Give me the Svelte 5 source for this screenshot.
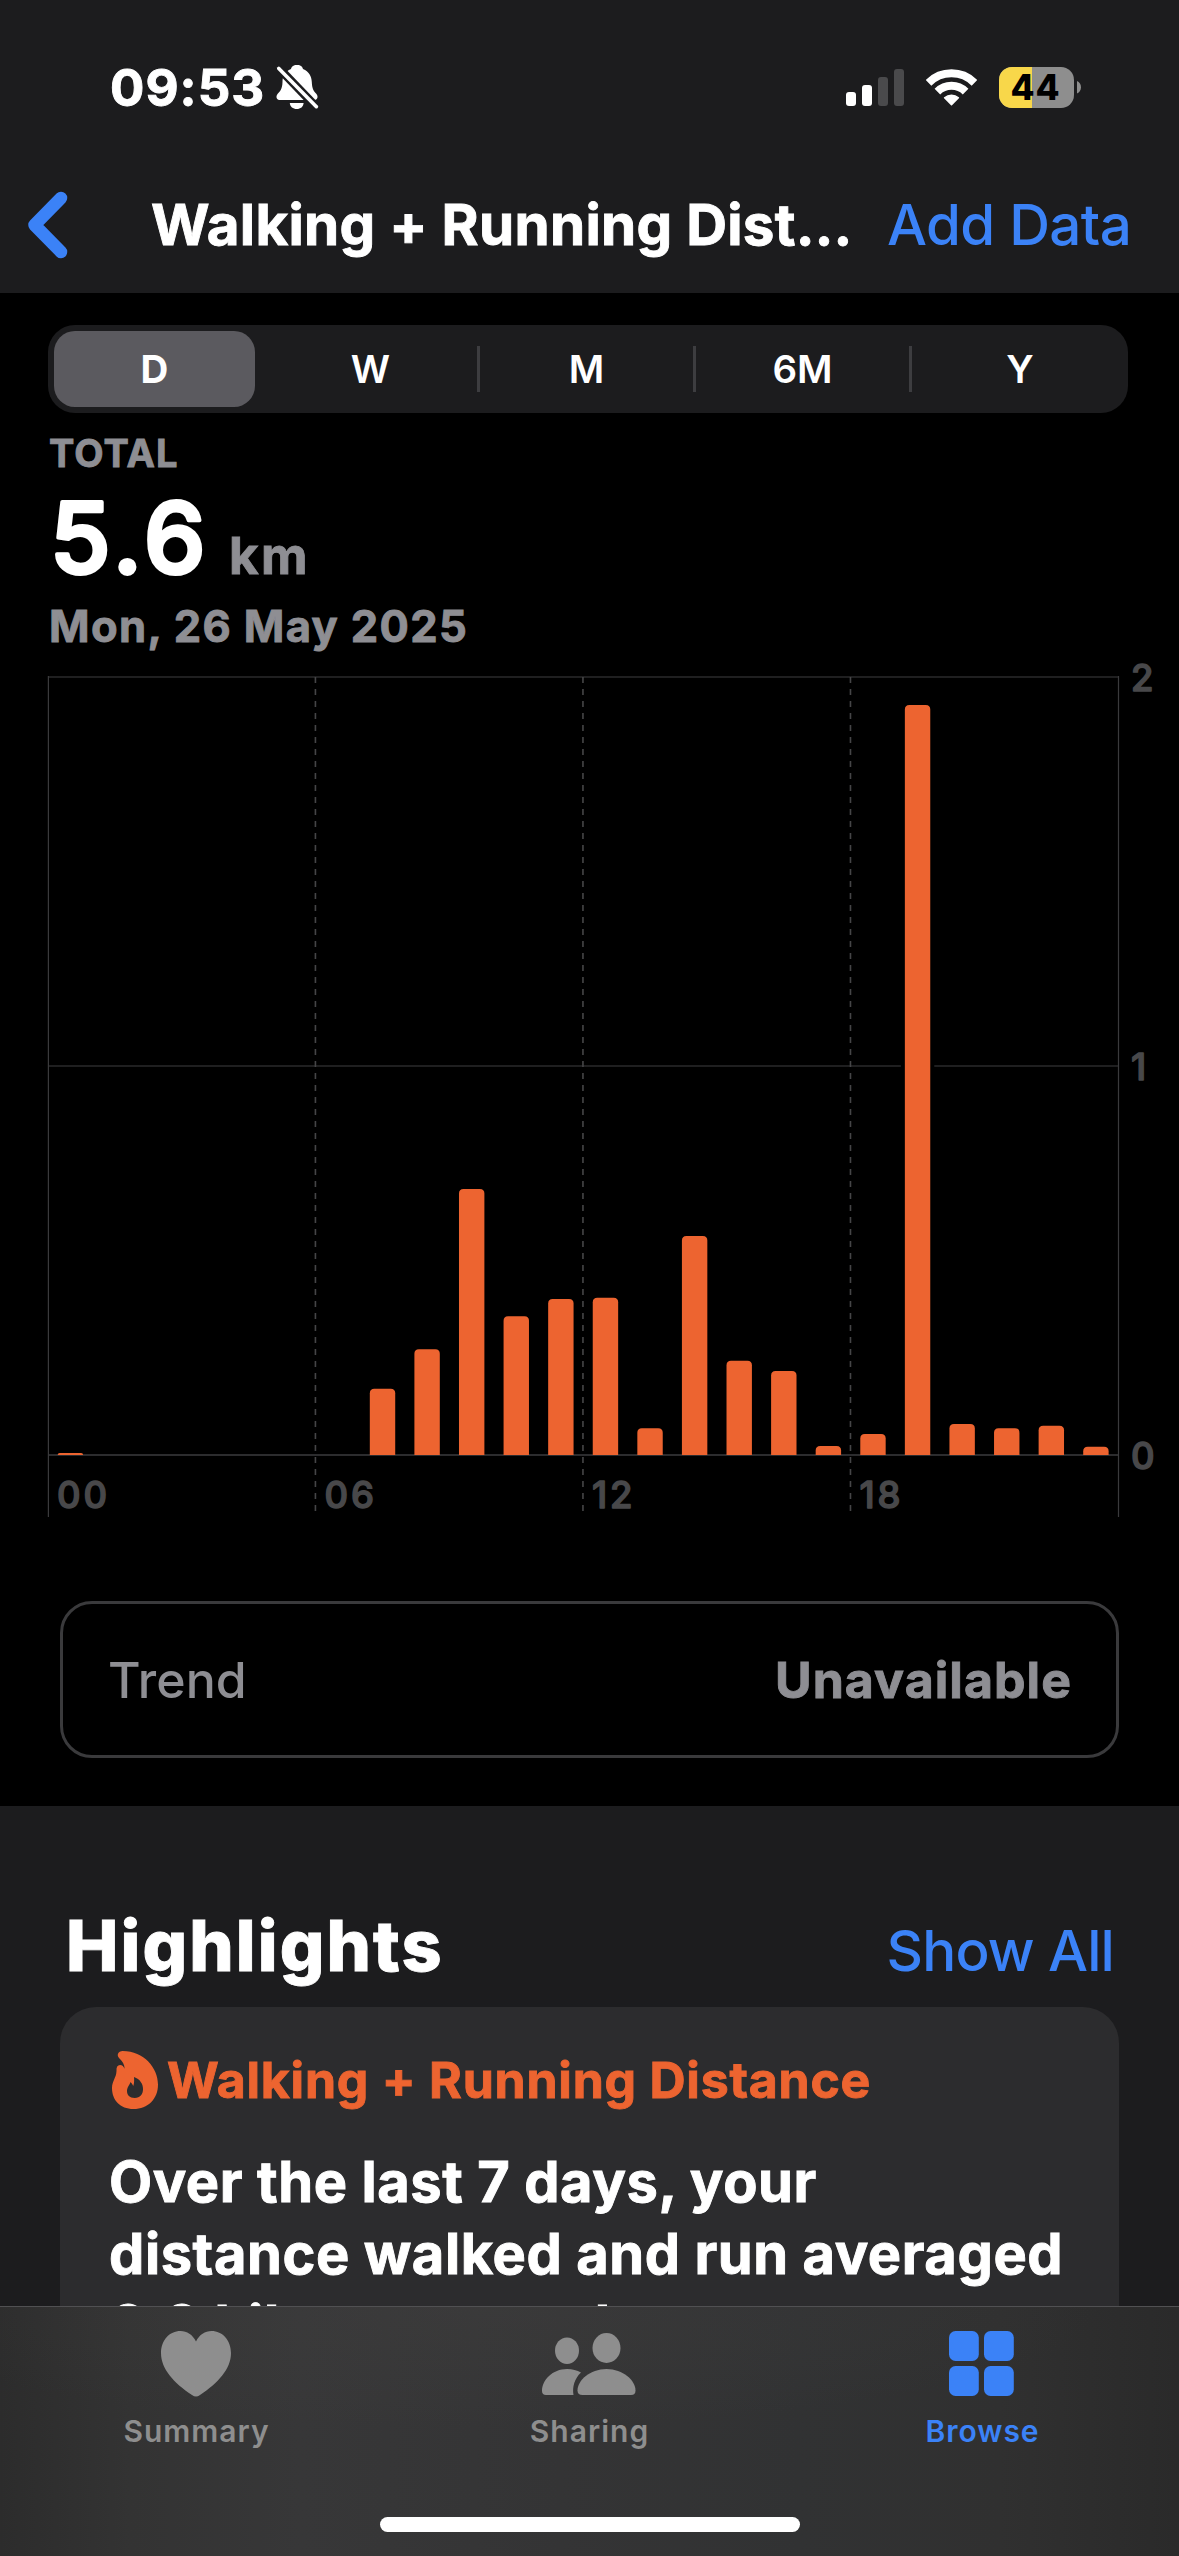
<script>
  const ranges = ['D', 'W', 'M', '6M', 'Y'];

  // Kilometres walked per hour of the day, index 0 = midnight.
  const hourly = [
    0.005, 0, 0, 0, 0, 0, 0, 0.17, 0.272, 0.684, 0.357, 0.401,
    0.404, 0.069, 0.563, 0.242, 0.216, 0.023, 0.054, 1.928, 0.08, 0.069, 0.075, 0.021
  ];

  // Plot area in chart units.
  const left = 48.4;
  const right = 1118.5;
  const top = 26;
  const base = 804;
  const tail = 866;
  const kmHeight = (base - top) / 2;
  const hourWidth = (right - left) / 24;
  const barWidth = 25.4;

  const bars = hourly
    .map((km, hour) => ({
      hour,
      x: left + hour * hourWidth + 9.3,
      y: base - Math.max(km * kmHeight, 2),
      h: Math.max(km * kmHeight, 2)
    }))
    .filter((b) => hourly[b.hour] > 0);

  const barPath = (b) => {
    const r = Math.min(4.5, b.h);
    return `M${b.x} ${base}V${b.y + r}Q${b.x} ${b.y} ${b.x + r} ${b.y}H${b.x + barWidth - r}Q${b.x + barWidth} ${b.y} ${b.x + barWidth} ${b.y + r}V${base}Z`;
  };

  const hourLabels = [0, 6, 12, 18].map((h) => ({
    text: String(h).padStart(2, '0'),
    x: left + h * hourWidth
  }));
  const kmLabels = [2, 1, 0].map((km) => ({ text: km, y: base - km * kmHeight }));
</script>

<div class="screen">
  <header>
    <div class="status">
      <span class="time">09:53</span>
      <svg class="bell" width="44" height="45" viewBox="0 0 44 45">
        <path fill="#fff" d="M21 0C25 0 26.5 2 27 4C33 6.5 35.5 11 35.8 17C36 24 38 26.5 40.5 29C42.5 31.5 41.5 35 38.5 35H3.5C.5 35-.5 31.5 1.5 29C4 26.5 6.3 24 6.5 17C6.5 11 9 6.500 15 4C15.500 2 17 0 21 0Z" />
        <path fill="#fff" d="M13.800 38H27.600C27.400 41.800 24.500 44 20.700 44C17 44 14 41.800 13.800 38Z" />
        <path d="M-1-1L44 46" stroke="#1c1c1e" stroke-width="8.500" />
        <path d="M2.800 3.500L40.400 41.700" stroke="#fff" stroke-width="3.600" stroke-linecap="round" />
      </svg>
      <div class="indicators">
        <svg width="58" height="37" viewBox="0 0 58 37">
          <rect x="0" y="23" width="10" height="14" rx="3" fill="#fff" />
          <rect x="16" y="16" width="10" height="21" rx="3" fill="#fff" />
          <rect x="32" y="8" width="10" height="29" rx="3" fill="#4a4a4c" />
          <rect x="48" y="0" width="10" height="37" rx="3" fill="#4a4a4c" />
        </svg>
        <svg class="wifi" width="51" height="37" viewBox="0 0 51 37">
          <g fill="none" stroke="#fff" stroke-width="8">
            <path d="M2.500 13.800A32.500 32.500 0 0 1 48.500 13.800" />
            <path d="M11.400 22.600A20 20 0 0 1 39.600 22.600" />
          </g>
          <path fill="#fff" stroke="#fff" stroke-width="1.500" stroke-linejoin="round" d="M25.500 35.800L18.600 28.800A10.400 10.400 0 0 1 32.400 28.800Z" />
        </svg>
        <svg width="82" height="41" viewBox="0 0 82 41">
          <clipPath id="cell"><rect width="75" height="41" rx="13" /></clipPath>
          <g clip-path="url(#cell)">
            <rect width="75" height="41" fill="#8e8e8e" />
            <rect width="33" height="41" fill="#f8d74a" />
          </g>
          <path fill="#8e8e8e" d="M78 14C80.500 15.200 82 17.500 82 20.300S80.500 25.400 78 26.600Z" />
          <text x="11.500" y="33" class="charge">44</text>
        </svg>
      </div>
    </div>
    <nav>
      <svg class="back" width="42" height="70" viewBox="0 0 42 70">
        <path d="M34 8L7.500 35L34 62" fill="none" stroke="#3b82f7" stroke-width="12.500" stroke-linecap="round" stroke-linejoin="round" />
      </svg>
      <h1>Walking + Running Dist…</h1>
      <span class="add">Add Data</span>
    </nav>
  </header>

  <main>
    <div class="segments">
      {#each ranges as range, i}
        <div class="segment" class:selected={i === 0} class:ruled={i > 0 && i < ranges.length - 1}>
          <span>{range}</span>
        </div>
      {/each}
    </div>

    <div class="caption">TOTAL</div>
    <div class="value">
      <svg width="181" height="126" viewBox="0 -6 181 126">
        <text x="2" y="98.500" class="number">5.6</text>
      </svg>
      <span class="unit">km</span>
    </div>
    <div class="date">Mon, 26 May 2025</div>

    <svg class="chart" width="1179" height="879" viewBox="0 0 1179 879">
      <path d="M{left} {top}H{right}M{left} {top + kmHeight}H{right}" stroke="#1f1f20" stroke-width="2" />
      <path d="M{left} {base}H{right}" stroke="#2c2c2e" stroke-width="2" />
      <path d="M{left} {top - 1}V{tail}M{right} {top - 1}V{tail}" stroke="#3a3a3c" stroke-width="1.200" />
      {#each hourLabels.slice(1) as label}
        <path d="M{label.x - 0.5} {top}V{tail}" stroke="#454547" stroke-width="1.600" stroke-dasharray="6 6" />
      {/each}
      {#each bars as bar (bar.hour)}
        <rect x={bar.x - 4} y={bar.y - 4} width={barWidth + 8} height={base - bar.y + 3} fill="#000" />
        <path d={barPath(bar)} fill="#ed6430" />
      {/each}
      <g class="axis">
        {#each hourLabels as label}
          <text x={label.x + 8.5} y="857">{label.text}</text>
        {/each}
        {#each kmLabels as label}
          <text x="1131" y={label.y + 13.500}>{label.text}</text>
        {/each}
      </g>
    </svg>

    <div class="trend">
      <span>Trend</span>
      <b>Unavailable</b>
    </div>
  </main>

  <section>
    <div class="heading">
      <h2>Highlights</h2>
      <span>Show All</span>
    </div>
    <article>
      <div class="topic">
        <svg width="46" height="58" viewBox="0 0 46 58">
          <path fill="#ed6430" fill-rule="evenodd" d="M10.700 0C32 0 46 17 46 33.500C46 48 36 58 21.500 58C8 58 0 49 0 37C0 30 4.200 27 4.500 20C4.200 16 5.500 14 8 14C10.500 14 11.500 15.500 12.600 17.800C12.600 13.500 10.500 10.500 7 7C4.500 4 6 0 10.700 0ZM22 26C28 28 31 33 31 38C31 43.500 28 47 22.800 47C17.500 47 15 44 15 40C15 36 17.500 34.500 18.500 31C19.600 32 20.500 33.500 21.300 35C22.300 32 22.300 29 22 26Z" />
        </svg>
        <span>Walking + Running Distance</span>
      </div>
      <p>Over the last 7 days, your<br />distance walked and run averaged<br /><span class="wide">6.6 kilometres a day.</span></p>
    </article>
  </section>

  <footer>
    <div class="tabs">
      <div class="tab">
        <svg width="70" height="66" viewBox="0 0 70 66">
          <path fill="currentColor" d="M35 10.500C38.500 3.500 44 0 50.500 0C61.500 0 70 9.300 70 22C70 38 57 52 39 64C36.200 66 33.800 66 31 64C13 52 0 38 0 22C0 9.300 8.500 0 19.500 0C26 0 31.500 3.500 35 10.500Z" />
        </svg>
        <span>Summary</span>
      </div>
      <div class="tab">
        <svg width="94" height="66" viewBox="0 0 94 66">
          <g fill="currentColor">
            <ellipse cx="25" cy="19.700" rx="12" ry="13.300" />
            <ellipse cx="64.500" cy="17" rx="14" ry="15" />
            <path d="M39 41.500C32.500 47.500 30 56 31.500 64H4C1.500 64 0 62.500 0 60C0 49 10.500 38 25 38C30.500 38 35 39.300 39 41.500Z" />
            <path d="M64.500 38C81 38 93.500 49.500 93.500 59.500C93.500 62.500 92 64 89 64H40.500C37.300 64 35.500 62.500 35.500 59.500C35.500 49.500 48 38 64.500 38Z" />
          </g>
        </svg>
        <span>Sharing</span>
      </div>
      <div class="tab active">
        <svg width="65" height="66" viewBox="0 0 65 66">
          <g fill="currentColor">
            <rect x="0" y="0" width="29.800" height="30" rx="6.500" />
            <rect x="35" y="0" width="29.800" height="30" rx="6.500" />
            <rect x="0" y="35" width="29.800" height="30" rx="6.500" />
            <rect x="35" y="35" width="29.800" height="30" rx="6.500" />
          </g>
        </svg>
        <span>Browse</span>
      </div>
    </div>
    <div class="home"></div>
  </footer>
</div>

<style>
  :global(body) {
    margin: 0;
    background: #000;
  }
  .screen {
    width: 1179px;
    height: 2556px;
    display: flex;
    flex-direction: column;
    overflow: hidden;
    background: #000;
    color: #fff;
    font-family: Inter, 'Liberation Sans', sans-serif;
    white-space: nowrap;
  }
  svg {
    display: block;
    flex: none;
  }
  h1, h2, p {
    margin: 0;
  }
  /* Thickens the bold weights a little without widening them. */
  h1, h2, p, .time, .caption, .unit, .date, .trend b, .topic span {
    -webkit-text-stroke: 0.9px currentColor;
  }

  header {
    height: 293px;
    background: #1c1c1e;
  }
  .status {
    height: 175px;
    display: flex;
    align-items: center;
    padding: 0 98px 0 110px;
  }
  .time {
    width: 166px;
    font-size: 51px;
    font-weight: 700;
    letter-spacing: 1.05px;
    line-height: 60px;
  }
  .bell {
    overflow: hidden;
  }
  .indicators {
    margin-left: auto;
    display: flex;
    align-items: center;
  }
  .wifi {
    margin: 0 22px;
  }
  .charge {
    font-size: 35px;
    font-weight: 800;
    letter-spacing: 0.8px;
    fill: #000;
  }
  nav {
    height: 100px;
    display: flex;
    align-items: center;
    padding: 0 47px 0 27px;
    font-size: 56.5px;
    line-height: 70px;
  }
  h1 {
    margin-left: 82px;
    width: 736px;
    font-size: inherit;
    font-weight: 700;
    letter-spacing: 0.3px;
  }
  .add {
    color: #3b82f7;
    font-weight: 500;
    letter-spacing: -0.6px;
  }

  main {
    height: 1513px;
    display: flex;
    flex-direction: column;
    align-items: flex-start;
  }
  .segments {
    width: 1080px;
    height: 88px;
    box-sizing: border-box;
    margin: 32px 0 0 48px;
    padding: 6px 0;
    display: flex;
    border-radius: 27px;
    background: #1c1c1e;
    font-size: 38.5px;
    font-weight: 600;
    line-height: 40px;
  }
  .segment {
    width: 216px;
    display: flex;
    align-items: center;
    justify-content: center;
    box-sizing: border-box;
  }
  .segment.selected {
    width: 201px;
    margin: 0 9px 0 6px;
    border-radius: 21px;
    background: #5b5a5f;
    font-weight: 700;
  }
  .segment.ruled {
    padding-right: 3px;
    background: linear-gradient(#3d3d40, #3d3d40) no-repeat right center / 3px 46px;
  }
  .caption {
    margin: 20px 0 0 49px;
    font-size: 38px;
    font-weight: 700;
    letter-spacing: 1.1px;
    line-height: 40px;
    color: #8e8e93;
  }
  .value {
    height: 121px;
    display: flex;
    align-items: flex-end;
    margin-left: 48px;
  }
  .number {
    font-size: 98px;
    font-weight: 500;
    letter-spacing: 4.3px;
    fill: #fff;
    stroke: #fff;
    stroke-width: 4px;
    stroke-linejoin: round;
  }
  .unit {
    margin-bottom: 8px;
    font-size: 51px;
    font-weight: 700;
    letter-spacing: 2.5px;
    line-height: 60px;
    color: #8e8e93;
  }
  .date {
    margin: 7px 0 0 49px;
    font-size: 43.5px;
    font-weight: 700;
    letter-spacing: 1.38px;
    line-height: 50px;
    color: #8e8e93;
  }
  .axis {
    font-size: 36.5px;
    font-weight: 500;
    letter-spacing: 3px;
    fill: #48484a;
    stroke: #48484a;
    stroke-width: 1.4px;
    stroke-linejoin: round;
  }
  .trend {
    width: 1059px;
    height: 157px;
    box-sizing: border-box;
    margin: 71px 0 0 60px;
    padding: 0 45px 0 45px;
    display: flex;
    align-items: center;
    justify-content: space-between;
    border: 3px solid #3a3a3c;
    border-radius: 32px;
    font-size: 50px;
    line-height: 60px;
    color: #8e8e93;
  }
  .trend span {
    font-weight: 500;
    letter-spacing: 0.05px;
  }
  .trend b {
    letter-spacing: 1.05px;
    margin-right: -1px;
  }

  section {
    flex: 1;
    min-height: 0;
    overflow: hidden;
    background: #1c1c1e;
  }
  .heading {
    display: flex;
    align-items: baseline;
    justify-content: space-between;
    height: 106px;
    padding: 95px 65px 0 66px;
  }
  h2 {
    font-size: 70px;
    font-weight: 800;
    letter-spacing: 2.1px;
    line-height: 90px;
  }
  .heading span {
    font-size: 56.5px;
    font-weight: 500;
    letter-spacing: -0.84px;
    color: #3b82f7;
  }
  article {
    height: 400px;
    margin: 0 60px;
    padding: 43px 48px 0 49px;
    border-radius: 36px;
    background: #2c2c2e;
  }
  .topic {
    height: 60px;
    display: flex;
    align-items: center;
    gap: 9px;
    padding-left: 3px;
    font-size: 50px;
    font-weight: 700;
    letter-spacing: 0.76px;
    color: #ed6430;
  }
  p {
    margin-top: 36px;
    font-size: 56px;
    font-weight: 700;
    letter-spacing: 0.58px;
    line-height: 72px;
  }
  .wide {
    letter-spacing: 1px;
  }

  footer {
    height: 250px;
    box-sizing: border-box;
    border-top: 1px solid #505052;
    background:
      radial-gradient(ellipse 620px 120px at 480px 0, rgba(68, 67, 66, 0.35), transparent),
      linear-gradient(90deg, #2c2c2c 0, #333333 130px, #373738 300px, #343435 560px, #313233 800px, #303030 1000px, #2a2a2a 1179px);
  }
  .tabs {
    height: 210px;
    display: flex;
  }
  .tab {
    flex: 1;
    display: flex;
    flex-direction: column;
    align-items: center;
    padding-top: 24px;
    font-size: 30px;
    font-weight: 600;
    letter-spacing: 1px;
    line-height: 36px;
    color: #8e8e8e;
  }
  .tab svg {
    margin-right: 2px;
  }
  .tab span {
    margin-top: 16px;
  }
  .active {
    color: #3b82f7;
  }
  .home {
    width: 420px;
    height: 15px;
    margin: 0 auto;
    border-radius: 8px;
    background: #fff;
  }
</style>
